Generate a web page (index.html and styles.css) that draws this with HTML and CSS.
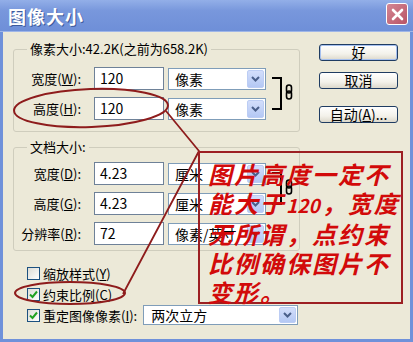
FILE: index.html
```html
<!DOCTYPE html>
<html lang="zh-CN">
<head>
    <meta charset="UTF-8">
    <title>图像大小</title>
    <link rel="stylesheet" href="styles.css">
</head>
<body>
    <div class="window">
        <div class="titlebar">
            <span class="title">图像大小</span>
            <span class="close">
                <svg width="13" height="13" viewBox="0 0 13 13"><path d="M2 2L11 11M11 2L2 11" stroke="#fff" stroke-width="2.6" stroke-linecap="round"/></svg>
            </span>
        </div>
        <div class="content">
            <div class="main">
                <fieldset class="group">
                    <legend>像素大小:42.2K(之前为658.2K)</legend>
                    <div class="grid">
                        <label class="lbl">宽度(<u>W</u>):</label>
                        <div class="field">120</div>
                        <div class="combo"><span>像素</span><i class="drop"><svg width="9" height="6" viewBox="0 0 9 6"><path d="M1 1L4.5 4.5L8 1" fill="none" stroke="#4a5f8a" stroke-width="2"/></svg></i></div>
                        <div class="link">
                            <span class="bracket"></span>
                            <svg class="chain" width="8" height="16" viewBox="0 0 8 16"><rect x="1.5" y="1" width="5" height="8" rx="2.5" fill="none" stroke="#000" stroke-width="1.6"/><rect x="1.5" y="7" width="5" height="8" rx="2.5" fill="none" stroke="#000" stroke-width="1.6"/></svg>
                        </div>
                        <label class="lbl">高度(<u>H</u>):</label>
                        <div class="field">120</div>
                        <div class="combo"><span>像素</span><i class="drop"><svg width="9" height="6" viewBox="0 0 9 6"><path d="M1 1L4.5 4.5L8 1" fill="none" stroke="#4a5f8a" stroke-width="2"/></svg></i></div>
                    </div>
                </fieldset>

                <fieldset class="group group-doc">
                    <legend>文档大小:</legend>
                    <div class="grid">
                        <label class="lbl">宽度(<u>D</u>):</label>
                        <div class="field">4.23</div>
                        <div class="combo"><span>厘米</span><i class="drop"><svg width="9" height="6" viewBox="0 0 9 6"><path d="M1 1L4.5 4.5L8 1" fill="none" stroke="#4a5f8a" stroke-width="2"/></svg></i></div>
                        <div class="link">
                            <span class="bracket"></span>
                            <svg class="chain" width="8" height="16" viewBox="0 0 8 16"><rect x="1.5" y="1" width="5" height="8" rx="2.5" fill="none" stroke="#000" stroke-width="1.6"/><rect x="1.5" y="7" width="5" height="8" rx="2.5" fill="none" stroke="#000" stroke-width="1.6"/></svg>
                        </div>
                        <label class="lbl">高度(<u>G</u>):</label>
                        <div class="field">4.23</div>
                        <div class="combo"><span>厘米</span><i class="drop"><svg width="9" height="6" viewBox="0 0 9 6"><path d="M1 1L4.5 4.5L8 1" fill="none" stroke="#4a5f8a" stroke-width="2"/></svg></i></div>
                        <label class="lbl">分辨率(<u>R</u>):</label>
                        <div class="field">72</div>
                        <div class="combo"><span>像素/英寸</span><i class="drop"><svg width="9" height="6" viewBox="0 0 9 6"><path d="M1 1L4.5 4.5L8 1" fill="none" stroke="#4a5f8a" stroke-width="2"/></svg></i></div>
                    </div>
                </fieldset>

                <div class="checks">
                    <div class="check-row">
                        <span class="box"></span>
                        <span>缩放样式(<u>Y</u>)</span>
                    </div>
                    <div class="check-row">
                        <span class="box checked"><svg width="9" height="9" viewBox="0 0 9 9"><path d="M1 4.5L3.5 7L8 1.5" fill="none" stroke="#21a121" stroke-width="2"/></svg></span>
                        <span>约束比例(<u>C</u>)</span>
                    </div>
                    <div class="check-row">
                        <span class="box checked"><svg width="9" height="9" viewBox="0 0 9 9"><path d="M1 4.5L3.5 7L8 1.5" fill="none" stroke="#21a121" stroke-width="2"/></svg></span>
                        <span>重定图像像素(<u>I</u>):</span>
                        <div class="combo combo-wide"><span>两次立方</span><i class="drop"><svg width="9" height="6" viewBox="0 0 9 6"><path d="M1 1L4.5 4.5L8 1" fill="none" stroke="#4a5f8a" stroke-width="2"/></svg></i></div>
                    </div>
                </div>
            </div>

            <div class="buttons">
                <button class="btn btn-default">好</button>
                <button class="btn">取消</button>
                <button class="btn btn-auto">自动(<u>A</u>)...</button>
            </div>
        </div>

        <svg class="marks" width="413" height="342" viewBox="0 0 413 342">
            <ellipse cx="91" cy="108" rx="77" ry="19" transform="rotate(-2 91 108)" fill="none" stroke="#8e1c1c" stroke-width="2"/>
            <ellipse cx="70" cy="293" rx="55" ry="11" fill="none" stroke="#8e1c1c" stroke-width="2"/>
            <path d="M166 111L199 151L123 294" fill="none" stroke="#8e1c1c" stroke-width="1.8"/>
        </svg>
        <div class="note">
            <div>图片高度一定不</div>
            <div>能大于<span class="num">120</span>，宽度</div>
            <div>无所谓，点约束</div>
            <div>比例确保图片不</div>
            <div>变形。</div>
        </div>
    </div>
</body>
</html>
```

FILE: styles.css
```css
* {
    box-sizing: border-box;
}

body {
    margin: 0;
    width: 413px;
    height: 342px;
    overflow: hidden;
    font-family: "Noto Sans CJK SC", "Noto Sans", sans-serif;
    font-size: 13px;
    color: #000;
}

.window {
    position: relative;
    width: 413px;
    height: 342px;
    display: flex;
    flex-direction: column;
    background: #6f91da;
    padding: 0 3px 3px;
}

.titlebar {
    height: 32px;
    margin: 0 -3px;
    padding: 0 5px 0 8px;
    display: flex;
    align-items: center;
    justify-content: space-between;
    background: linear-gradient(#93afe8 0%, #7897dc 35%, #6e8fd8 100%);
    border-bottom: 1px solid #9fb6e8;
}

.title {
    color: #fff;
    font-size: 18px;
    font-weight: bold;
    letter-spacing: 1px;
    text-shadow: 1px 1px 0 #3c5a9c;
}

.close {
    width: 22px;
    height: 22px;
    margin-top: -3px;
    display: flex;
    align-items: center;
    justify-content: center;
    background: linear-gradient(135deg, #d48794, #b95466);
    border: 1px solid #fff;
    border-radius: 3px;
}

.content {
    flex: 1;
    background: #ece9d8;
    display: flex;
    padding: 10px 12px 0 10px;
    gap: 19px;
}

.main {
    width: 287px;
    display: flex;
    flex-direction: column;
}

.group {
    margin: 0;
    padding: 11px 0 11px;
    border: 1px solid #cfcdbd;
    border-radius: 3px;
}

.group-doc {
    margin-top: 8px;
    padding: 8px 0 5px;
}

legend {
    margin-left: 13px;
    padding: 0 3px;
    font-size: 13px;
    line-height: 14px;
}

.grid {
    display: grid;
    grid-template-columns: 80px 74px 98px auto;
    grid-auto-rows: 23px;
    row-gap: 7px;
    align-items: center;
}

.lbl {
    text-align: right;
    padding-right: 13px;
    line-height: 23px;
    white-space: nowrap;
}

.field {
    width: 70px;
    height: 23px;
    padding-left: 5px;
    border: 1px solid #6e8198;
    background: #fff;
    font-size: 14px;
    line-height: 21px;
}

.combo {
    width: 98px;
    height: 22px;
    display: flex;
    align-items: center;
    justify-content: space-between;
    padding: 1px 1px 1px 6px;
    border: 1px solid #7f9db9;
    background: #fff;
    font-size: 14px;
    white-space: nowrap;
}

.drop {
    width: 17px;
    height: 100%;
    display: flex;
    align-items: center;
    justify-content: center;
    background: linear-gradient(#d3defb, #b4c8f4);
    border: 1px solid #bccdf4;
    border-radius: 2px;
}

.link {
    grid-row: 1 / span 2;
    grid-column: 4;
    align-self: stretch;
    display: flex;
    align-items: center;
    margin: 10px 0 10px 6px;
}

.bracket {
    width: 10px;
    align-self: stretch;
    border: 2px solid #000;
    border-left: none;
}

.chain {
    margin: -4px 0 0 3px;
}

.checks {
    margin-top: 12px;
    padding-left: 14px;
    display: flex;
    flex-direction: column;
    gap: 1px;
}

.check-row {
    height: 20px;
    display: flex;
    align-items: center;
    gap: 3px;
    white-space: nowrap;
}

.box {
    width: 13px;
    height: 13px;
    display: flex;
    align-items: center;
    justify-content: center;
    border: 1px solid #1c5180;
    background: linear-gradient(135deg, #dcdcd5, #fff);
}

.combo-wide {
    width: 155px;
    height: 20px;
    margin-left: 3px;
    padding-left: 7px;
}

.buttons {
    display: flex;
    flex-direction: column;
    padding-top: 2px;
}

.btn {
    width: 79px;
    height: 17px;
    padding: 0;
    margin-bottom: 11px;
    font-family: inherit;
    font-size: 14px;
    line-height: 15px;
    border: 1px solid #1f3c62;
    border-radius: 3px;
    background: linear-gradient(#ffffff, #f3f1ea 60%, #dcd8cb);
}

.btn-default {
    box-shadow: inset 0 0 0 1px #a6c0ef;
}

.btn-auto {
    margin-top: 6px;
}

.marks {
    position: absolute;
    top: 0;
    left: 0;
    pointer-events: none;
}

.note {
    position: absolute;
    left: 198px;
    top: 151px;
    width: 205px;
    height: 153px;
    padding: 6px 0 0 8px;
    border: 2px solid #9c1f22;
    color: #d20a0a;
    font-size: 24px;
    font-weight: bold;
    font-style: italic;
    line-height: 29px;
    letter-spacing: 2px;
    white-space: nowrap;
}

.num {
    font-size: 19px;
    letter-spacing: 0;
    margin-right: 2px;
}
```
